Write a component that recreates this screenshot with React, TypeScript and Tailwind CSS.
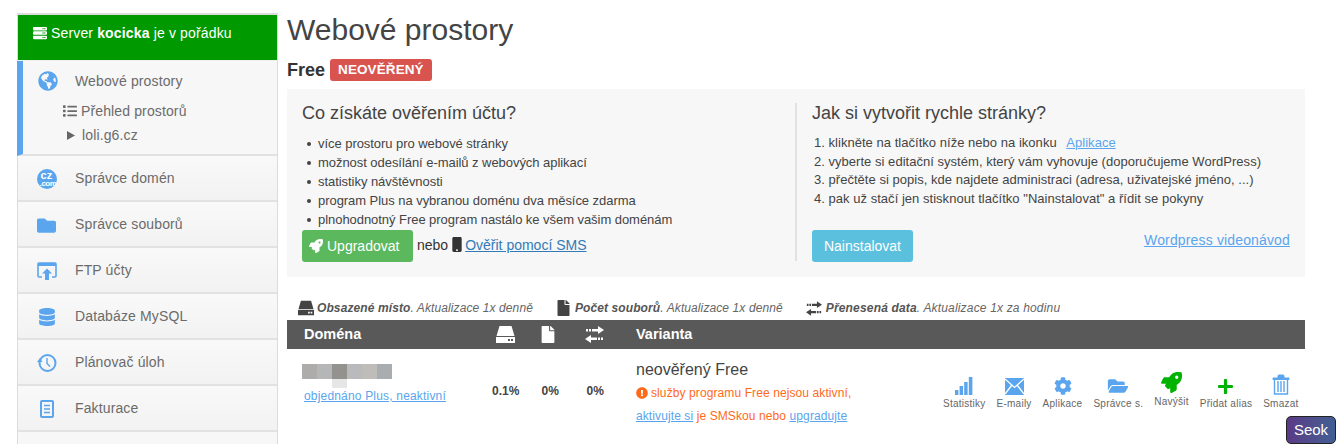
import React from "react";
import {
  FaServer, FaGlobeAmericas, FaList, FaFolder, FaDatabase, FaFile,
  FaRocket, FaMobile, FaCog, FaFolderOpen, FaPlus, FaExclamationCircle,
} from "react-icons/fa";

const blue = "#5aa5ee";

function CzIcon() {
  return (
    <div className="w-[20px] h-[20px] rounded-full bg-[#5aa5ee] flex flex-col items-center justify-center text-white font-bold">
      <span className="text-[11px] leading-[10px] -mt-[1px]">cz</span>
      <span className="text-[8px] leading-[8px] ml-[3px] tracking-[-0.5px]">.com</span>
    </div>
  );
}
function FtpIcon() {
  return (
    <svg width="20" height="18" viewBox="0 0 20 18">
      <path d="M5 15 H2 a1 1 0 0 1-1-1 V2 a1 1 0 0 1 1-1 h16 a1 1 0 0 1 1 1 v12 a1 1 0 0 1-1 1 h-3" fill="none" stroke={blue} strokeWidth="1.6" />
      <rect x="1" y="1" width="18" height="3" fill={blue} />
      <path d="M10 6.5 L15 11.5 H12 V18 H8 V11.5 H5 Z" fill={blue} />
    </svg>
  );
}
function ClockIcon() {
  return (
    <svg width="20" height="20" viewBox="0 0 20 20">
      <circle cx="10.5" cy="10" r="8" fill="none" stroke={blue} strokeWidth="2" />
      <path d="M10 5 V10.5 L13 13.5" fill="none" stroke={blue} strokeWidth="1.4" />
      <path d="M0 9 L3 5 L5.5 9 Z" fill={blue} />
    </svg>
  );
}
function DocIcon() {
  return (
    <svg width="14" height="18" viewBox="0 0 14 18">
      <rect x="1" y="1" width="12" height="16" rx="1" fill="none" stroke={blue} strokeWidth="2" />
      <path d="M4 5.5 H10 M4 9 H10 M4 12.5 H10" stroke={blue} strokeWidth="1.6" />
    </svg>
  );
}
function TrashIcon() {
  return (
    <svg width="18" height="21" viewBox="0 0 18 21">
      <path d="M1 4 H17 V5.5 H1 Z M6 4 V2 a1 1 0 0 1 1-1 h4 a1 1 0 0 1 1 1 v2" fill={blue} stroke={blue} strokeWidth="1" />
      <path d="M2.5 6 V20 H15.5 V6" fill="none" stroke={blue} strokeWidth="1.4" />
      <path d="M6 7 V18 M9 7 V18 M12 7 V18" stroke={blue} strokeWidth="1.4" />
    </svg>
  );
}
function HddIcon({ className }: { className: string }) {
  return (
    <svg className={className} viewBox="0 0 19 17" fill="currentColor">
      <path d="M3.5 0 H15.5 L18.5 10 H0.5 Z" />
      <path fillRule="evenodd" d="M0 11 H19 V17 H0 Z M12 13 V15 H14 V13 Z M15 13 V15 H17 V13 Z" />
    </svg>
  );
}
function ExchangeIcon({ className }: { className: string }) {
  return (
    <svg className={className} viewBox="0 0 19 17" fill="currentColor">
      <path d="M13 0 L19 4 L13 8 Z M7 3 H13 V5.5 H7 Z M4 3 H6 V5.5 H4 Z M1 3 H3 V5.5 H1 Z" />
      <path d="M6 9 L0 13 L6 17 Z M6 11.5 H12 V14 H6 Z M13 11.5 H15 V14 H13 Z M16 11.5 H18 V14 H16 Z" />
    </svg>
  );
}
function SignalIcon() {
  return (
    <svg width="18" height="18" viewBox="0 0 18 18" fill={blue}>
      <rect x="0" y="13" width="3.4" height="5" />
      <rect x="4.6" y="9" width="3.4" height="9" />
      <rect x="9.2" y="5" width="3.4" height="13" />
      <rect x="13.8" y="0" width="3.6" height="18" />
    </svg>
  );
}
function MailIcon() {
  return (
    <svg width="19" height="17" viewBox="0 0 19 17">
      <rect x="0" y="0" width="19" height="17" fill={blue} />
      <path d="M0 1 L9.5 9.5 L19 1 M0 16 L6.5 7.5 M19 16 L12.5 7.5" fill="none" stroke="#fff" strokeWidth="1.3" />
    </svg>
  );
}

function NavItem({ icon, label }: { icon: React.ReactNode; label: string }) {
  return (
    <div className="h-[46px] border-b-2 border-[#e2e2e2] bg-gradient-to-b from-[#f9f9f9] to-[#f2f2f2] flex items-start pt-[14px] text-[14px] tracking-[0.13px] text-[#6b6b6b]">
      <div className="w-[57px] h-[20px] flex items-center justify-center shrink-0 -mt-px">{icon}</div>
      <span className="leading-[16px]">{label}</span>
    </div>
  );
}

function Action({ icon, label, className = "" }: { icon: React.ReactNode; label: string; className?: string }) {
  return (
    <div className={"flex flex-col items-center text-[10px] leading-[12px] text-[#666] tracking-[0.25px] " + className}>
      <div className="h-[21px] flex items-end justify-center">{icon}</div>
      <span className="mt-[3px] whitespace-nowrap">{label}</span>
    </div>
  );
}

export default function App() {
  return (
    <div className="relative h-[444px] w-[1336px] overflow-hidden bg-white flex pl-[17px] pt-[13px] text-[#333] font-['Liberation_Sans',Arial,sans-serif]">
      <aside className="w-[261px] shrink-0 border-x-[1px] border-t-2 border-[#dcdcdc] bg-[#f7f7f7] h-[440px]">
        <div className="h-[46px] bg-[#009900] text-white text-[14px] tracking-[0.15px] leading-[16px] pt-[10px] pl-[15px] flex items-start gap-[4px] border-b border-[#eee]">
          <FaServer className="w-[14px] h-[14px] mt-[1px]" />
          <span>Server <b>kocicka</b> je v pořádku</span>
        </div>
        <div className="h-[95px] border-b-2 border-[#e2e2e2] border-l-[6px] border-l-[#5aa5ee] -ml-px bg-[#f7f7f7] text-[14px] tracking-[0.13px] text-[#6b6b6b] pt-[10px]">
          <div className="flex items-center h-[20px]">
            <div className="w-[50px] flex justify-center shrink-0">
              <FaGlobeAmericas className="w-[20px] h-[20px] text-[#5aa5ee]" />
            </div>
            <span className="ml-[2px]">Webové prostory</span>
          </div>
          <div className="flex items-center h-[16px] mt-[12px] pl-[40px] gap-[4px]">
            <FaList className="w-[14px] h-[14px]" />
            <span>Přehled prostorů</span>
          </div>
          <div className="flex items-center h-[16px] mt-[8px] pl-[44px]">
            <svg width="8" height="9" viewBox="0 0 8 9" fill="#666"><path d="M0 0 L8 4.5 L0 9 Z" /></svg>
            <span className="ml-[7px]">loli.g6.cz</span>
          </div>
        </div>
        <NavItem icon={<CzIcon />} label="Správce domén" />
        <NavItem icon={<FaFolder className="w-[21px] h-[19px] text-[#5aa5ee]" />} label="Správce souborů" />
        <NavItem icon={<FtpIcon />} label="FTP účty" />
        <NavItem icon={<FaDatabase className="w-[16px] h-[18px] text-[#5aa5ee]" />} label="Databáze MySQL" />
        <NavItem icon={<ClockIcon />} label="Plánovač úloh" />
        <NavItem icon={<DocIcon />} label="Fakturace" />
      </aside>

      <main className="ml-[9px] w-[1018px] shrink-0">
        <h1 className="text-[30px] leading-[33px] font-normal text-[#444] mt-0">Webové prostory</h1>
        <div className="flex items-center mt-[12px] h-[23px]">
          <b className="text-[18px] leading-[20px] text-[#333]">Free</b>
          <span className="ml-[5px] h-[22px] px-[8px] rounded-[3px] bg-[#d9534f] text-white text-[13.5px] font-bold leading-[22px] tracking-[0.1px]">NEOVĚŘENÝ</span>
        </div>

        <section className="mt-[8px] h-[188px] bg-[#f7f7f7] flex">
          <div className="w-[510px] mt-[14px] h-[158px] border-r-2 border-[#e2e2e2] pl-[15px]">
            <h2 className="text-[18px] leading-[20px] font-normal text-[#444]">Co získáte ověřením účtu?</h2>
            <ul className="mt-[11px] text-[13px] leading-[19px] text-[#444] tracking-[-0.05px]">
              {["více prostoru pro webové stránky", "možnost odesílání e-mailů z webových aplikací", "statistiky návštěvnosti", "program Plus na vybranou doménu dva měsíce zdarma", "plnohodnotný Free program nastálo ke všem vašim doménám"].map((t) => (
                <li key={t} className="flex items-center">
                  <span className="w-[4px] h-[4px] rounded-full bg-[#444] ml-[5px] mr-[7px]" />
                  {t}
                </li>
              ))}
            </ul>
            <div className="flex items-start mt-[1px]">
              <div className="h-[32px] w-[111px] rounded-[3px] bg-[#5cb85c] text-white text-[14px] flex items-center pl-[7px] gap-[4px]">
                <FaRocket className="w-[14px] h-[14px]" />
                Upgradovat
              </div>
              <span className="ml-[4px] text-[14px] leading-[30px]">nebo</span>
              <FaMobile className="w-[10px] h-[15px] mt-[7px] ml-[4px] text-[#333]" />
              <a className="ml-[3px] text-[14px] leading-[30px] text-[#337ab7] underline">Ověřit pomocí SMS</a>
            </div>
          </div>
          <div className="flex-1 pl-[15px] pr-[15px] pt-[14px]">
            <h2 className="text-[18px] leading-[20px] font-normal text-[#444]">Jak si vytvořit rychle stránky?</h2>
            <ol className="mt-[11px] ml-[2px] text-[13px] leading-[18.7px] text-[#444] tracking-[0.03px]">
              <li>1. klikněte na tlačítko níže nebo na ikonku <a className="ml-[6px] text-[#5aa5ee] underline">Aplikace</a></li>
              <li>2. vyberte si editační systém, který vám vyhovuje (doporučujeme WordPress)</li>
              <li>3. přečtěte si popis, kde najdete administraci (adresa, uživatejské jméno, ...)</li>
              <li>4. pak už stačí jen stisknout tlačítko "Nainstalovat" a řídit se pokyny</li>
            </ol>
            <div className="flex justify-between items-start mt-[21.2px]">
              <div className="h-[32px] w-[101px] rounded-[3px] bg-[#5bc0de] text-white text-[14px] flex items-center justify-center">Nainstalovat</div>
              <a className="text-[14px] tracking-[0.15px] leading-[20px] text-[#5aa5ee] underline">Wordpress videonávod</a>
            </div>
          </div>
        </section>

        <div className="mt-[20px] h-[23px] pb-[4px] flex items-end text-[12px] leading-[16px] italic text-[#666] pl-[11px] tracking-[0.1px]">
          <span className="flex items-center"><HddIcon className="w-[16px] h-[16px] text-[#444] mr-[3px]" /><b className="text-[#555]">Obsazené místo</b>. Aktualizace 1x denně</span>
          <span className="flex items-center ml-[24px]"><FaFile className="w-[13px] h-[16px] text-[#444] mr-[5px]" /><b className="text-[#555]">Počet souborů</b>. Aktualizace 1x denně</span>
          <span className="flex items-center ml-[23px] tracking-[0.17px]"><ExchangeIcon className="w-[16px] h-[15px] text-[#444] mr-[4px]" /><b className="text-[#555]">Přenesená data</b>. Aktualizace 1x za hodinu</span>
        </div>

        <div className="h-[29px] bg-[#595959] text-white font-bold text-[14.5px] flex items-center">
          <span className="ml-[17px] w-[192px]">Doména</span>
          <span className="w-[45px] flex"><HddIcon className="w-[19px] h-[17px]" /></span>
          <span className="w-[44px] flex"><FaFile className="w-[14px] h-[17px]" /></span>
          <span className="w-[51px] flex"><ExchangeIcon className="w-[19px] h-[17px]" /></span>
          <span>Varianta</span>
        </div>

        <div className="flex h-[80px]">
          <div className="w-[190px] pl-[15px] pt-[15px] shrink-0">
            <div className="flex h-[15px]">
              {["#aeacab", "#b4b6b7", "#93928e", "#b8babc", "#bfbdb9", "#a9adb0"].map((c) => (
                <div key={c} className="w-[15px] h-[15px]" style={{ background: c }} />
              ))}
            </div>
            <div className="w-[15px] h-[9px] ml-[30px] bg-[#e6e6e6]" />
            <a className="block ml-[2px] text-[12px] leading-[16px] text-[#5aa5ee] underline tracking-[0.18px]">objednáno Plus, neaktivní</a>
          </div>
          <div className="w-[159px] shrink-0 flex text-[12px] font-bold text-[#444] pt-[35px] leading-[14px]">
            <span className="w-[15px] ml-[15px] whitespace-nowrap">0.1%</span>
            <span className="ml-[34.5px] w-[16px]">0%</span>
            <span className="ml-[29px]">0%</span>
          </div>
          <div className="w-[300px] shrink-0 pt-[11px]">
            <div className="text-[16px] leading-[20px] text-[#444]">neověřený Free</div>
            <div className="mt-[5px] flex items-center text-[12px] leading-[16px] text-[#ff6a1a] tracking-[0.1px]">
              <FaExclamationCircle className="w-[12px] h-[12px] mr-[3px]" />služby programu Free nejsou aktivní,
            </div>
            <div className="mt-[7px] text-[12px] leading-[16px] text-[#ff6a1a] tracking-[0.1px]">
              <a className="text-[#5aa5ee] underline">aktivujte si</a> je SMSkou nebo <a className="text-[#5aa5ee] underline">upgradujte</a>
            </div>
          </div>
          <div className="flex-1 flex items-start pt-[25px] pl-[7px] gap-[11px]">
            <Action icon={<SignalIcon />} label="Statistiky" />
            <Action icon={<MailIcon />} label="E-maily" />
            <Action icon={<FaCog className="w-[18px] h-[18px] text-[#5aa5ee]" />} label="Aplikace" />
            <Action icon={<FaFolderOpen className="w-[24px] h-[18px] text-[#5aa5ee]" />} label="Správce s." />
            <Action className="-mt-[2px]" icon={<FaRocket className="w-[21px] h-[21px] text-[#00b300]" />} label="Navýšit" />
            <Action icon={<FaPlus className="w-[17px] h-[17px] text-[#00b300]" />} label="Přidat alias" />
            <Action icon={<TrashIcon />} label="Smazat" />
          </div>
        </div>
      </main>

      <div className="absolute right-0 top-[416px] w-[50px] h-[28px] rounded-[5px] border border-[#222] bg-gradient-to-r from-[#5a3a86] to-[#3f5f93] text-white text-[15px] flex items-center justify-center">Seok</div>
    </div>
  );
}
